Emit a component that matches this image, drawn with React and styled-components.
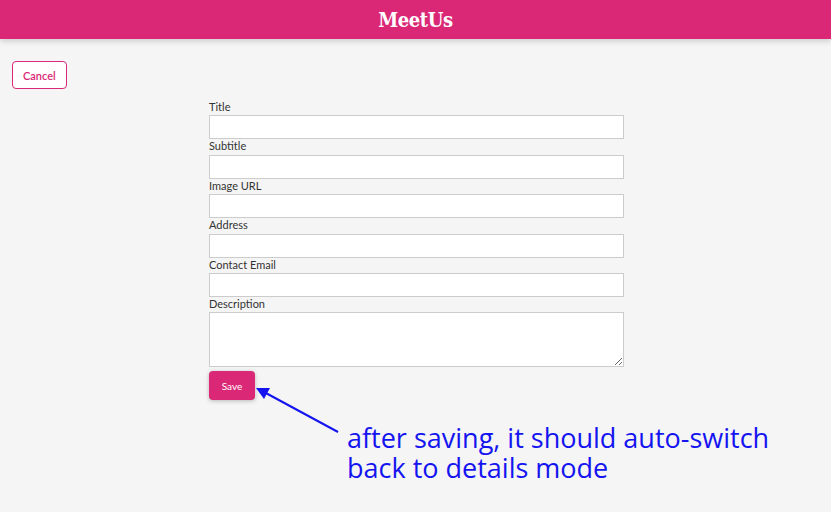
import styled, { createGlobalStyle } from 'styled-components';

const pink = '#da2877';

const GlobalStyle = createGlobalStyle`
  html, body {
    margin: 0;
    padding: 0;
    background: #f5f5f5;
    font-family: Lato, "Liberation Sans", sans-serif;
  }
  * {
    box-sizing: border-box;
  }
`;

const Page = styled.div`
  position: relative;
  width: 831px;
  height: 512px;
  overflow: hidden;
  background: #f5f5f5;
`;

const Header = styled.header`
  height: 39px;
  background: ${pink};
  box-shadow: 0 2px 6px rgba(0, 0, 0, 0.18);
  display: flex;
  align-items: center;
  justify-content: center;
`;

const Brand = styled.h1`
  margin: 0;
  color: #fff;
  font-family: "DejaVu Serif Condensed", "DejaVu Serif", serif;
  font-size: 20px;
  font-weight: bold;
  letter-spacing: -0.4px;
`;

const Main = styled.main`
  padding: 22px 12px 0;
`;

const CancelButton = styled.button`
  display: block;
  height: 28px;
  padding: 0 10px;
  border: 1px solid ${pink};
  border-radius: 4px;
  background: #fff;
  color: ${pink};
  font-family: Lato, sans-serif;
  font-size: 11px;
  font-weight: 600;
`;

const Form = styled.form`
  width: 415px;
  margin: 11px 0 0 197px;
  display: flex;
  flex-direction: column;
  align-items: flex-start;
`;

const Field = styled.div`
  width: 100%;
`;

const Label = styled.label`
  display: block;
  height: 15.4px;
  line-height: 14px;
  font-size: 11px;
  color: #333;
`;

const Input = styled.input`
  display: block;
  width: 100%;
  height: 24px;
  margin: 0;
  border: 1px solid #ccc;
  background: #fff;
`;

const TextArea = styled.textarea`
  display: block;
  width: 100%;
  height: 55px;
  margin: 0;
  border: 1px solid #ccc;
  background: #fff;
  resize: vertical;
`;

const SaveButton = styled.button`
  margin-top: 4px;
  height: 29px;
  width: 46px;
  border: none;
  border-radius: 4px;
  background: ${pink};
  color: #fff;
  font-family: Lato, sans-serif;
  font-size: 10px;
  box-shadow: 0 1px 4px rgba(0, 0, 0, 0.25);
`;

const Note = styled.div`
  position: absolute;
  left: 347px;
  top: 423px;
  color: #1414f0;
  font-family: "Open Sans", "DejaVu Sans", sans-serif;
  font-size: 27px;
  line-height: 30px;
  letter-spacing: 0;
`;

const Arrow = styled.svg`
  position: absolute;
  left: 250px;
  top: 380px;
`;

const fields = ['Title', 'Subtitle', 'Image URL', 'Address', 'Contact Email'];

export default function App() {
  return (
    <Page>
      <GlobalStyle />
      <Header>
        <Brand>MeetUs</Brand>
      </Header>
      <Main>
        <CancelButton type="button">Cancel</CancelButton>
        <Form onSubmit={(e) => e.preventDefault()}>
          {fields.map((f) => (
            <Field key={f}>
              <Label>{f}</Label>
              <Input type="text" />
            </Field>
          ))}
          <Field>
            <Label>Description</Label>
            <TextArea />
          </Field>
          <SaveButton type="submit">Save</SaveButton>
        </Form>
      </Main>
      <Arrow width="100" height="60" viewBox="0 0 100 60">
        <line x1="88" y1="52" x2="14" y2="12" stroke="#1414f0" strokeWidth="2" />
        <polygon points="6,8 20,8 14,19" fill="#1414f0" />
      </Arrow>
      <Note>
        after saving, it should auto-switch
        <br />
        back to details mode
      </Note>
    </Page>
  );
}
